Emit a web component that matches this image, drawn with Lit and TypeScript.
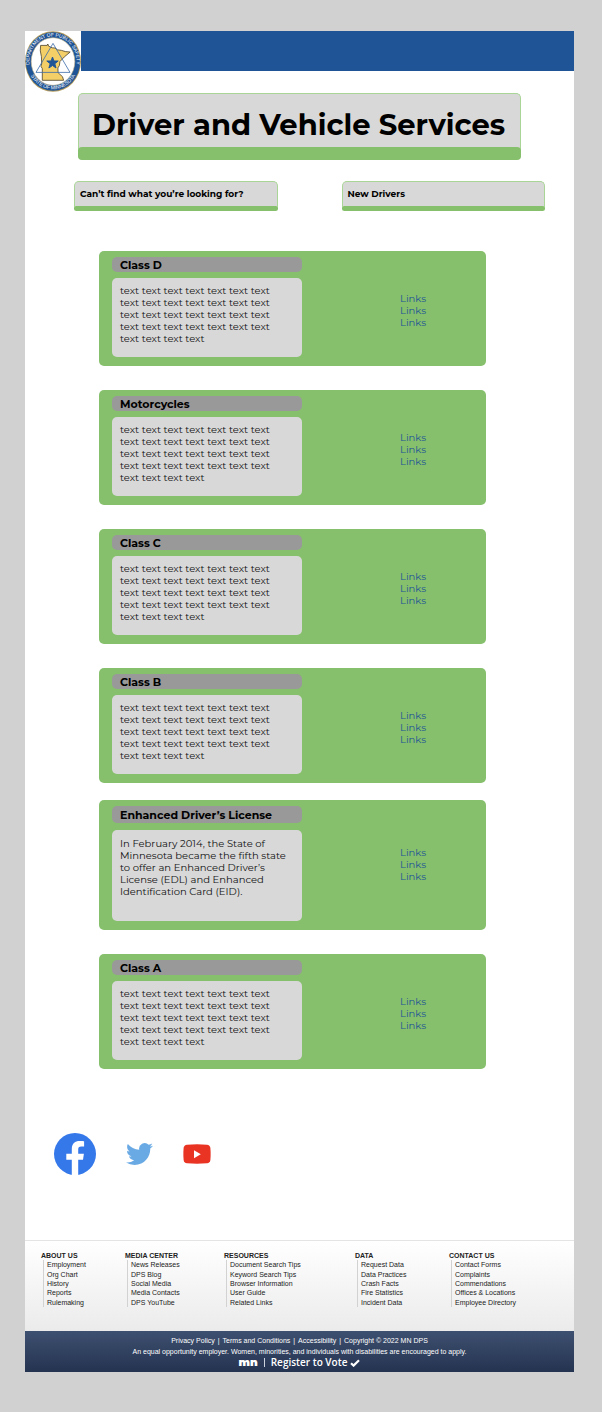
import { LitElement, html, css, svg } from "lit";
import { customElement, property } from "lit/decorators.js";

interface LicenseClass {
  title: string;
  body: string;
  featured?: boolean;
}

const FILLER = Array(32).fill("text").join(" ");

const CLASSES: LicenseClass[] = [
  { title: "Class D", body: FILLER },
  { title: "Motorcycles", body: FILLER },
  { title: "Class C", body: FILLER },
  { title: "Class B", body: FILLER },
  {
    title: "Enhanced Driver’s License",
    body: "In February 2014, the State of Minnesota became the fifth state to offer an Enhanced Driver’s License (EDL) and Enhanced Identification Card (EID).",
    featured: true,
  },
  { title: "Class A", body: FILLER },
];

const FOOTER = [
  { head: "ABOUT US", items: ["Employment", "Org Chart", "History", "Reports", "Rulemaking"] },
  { head: "MEDIA CENTER", items: ["News Releases", "DPS Blog", "Social Media", "Media Contacts", "DPS YouTube"] },
  { head: "RESOURCES", items: ["Document Search Tips", "Keyword Search Tips", "Browser Information", "User Guide", "Related Links"] },
  { head: "DATA", items: ["Request Data", "Data Practices", "Crash Facts", "Fire Statistics", "Incident Data"] },
  { head: "CONTACT US", items: ["Contact Forms", "Complaints", "Commendations", "Offices & Locations", "Employee Directory"] },
];

@customElement("dps-seal")
class DpsSeal extends LitElement {
  static styles = css`
    :host { display: block; }
    .seal { display: block; width: 100%; }
    .ring { font: 400 5px "Liberation Sans", sans-serif; fill: #fff; }
  `;
  render() {
    return html`<svg class="seal" viewBox="0 0 56 61" role="img" aria-label="Department of Public Safety, State of Minnesota">
      ${svg`
        <defs>
          <path id="top" d="M5.6 38.5 A23.6 25.2 0 1 1 50.4 38.5"/>
          <path id="bottom" d="M3 37.6 A25.9 28 0 0 0 53 37.6"/>
        </defs>
        <ellipse cx="28" cy="30.5" rx="28" ry="30.3" fill="#b59c5c"/>
        <ellipse cx="28" cy="30.5" rx="27.2" ry="29.3" fill="#1f5497"/>
        <ellipse cx="28" cy="30.5" rx="21.8" ry="23.8" fill="#fff" stroke="#c9b98a" stroke-width=".6"/>
        <path d="M15.6 14.4h6.6l.6-1.4.8 2.2 3.6 1.6 2.8.2 2.4 1.8 4.2.6 3.8 1.2 4.8.4-6 5-4.3 4.6-.5 3.9-1.5 2.4.2 4.8 4.4 4 1.1 3.6H17.3V37.6l-1.4-2.4.8-2.2-.3-7.4-1.1-5.8z" fill="#f4cf68" stroke="#4a4028" stroke-width=".8" stroke-linejoin="round"/>
        <path d="M28 12.4 45 41.4H11z" fill="none" stroke="#3a6aa8" stroke-width=".8"/>
        <path d="M27.5 26l1.4 4h4.3l-3.4 2.7 1.2 4.3-3.5-2.5-3.6 2.5 1.3-4.3-3.4-2.7h4.3z" fill="#1f5497" stroke="#1f5497"/>
        <text class="ring" text-anchor="middle"><textPath href="#top" startOffset="50%">DEPARTMENT OF PUBLIC SAFETY</textPath></text>
        <text class="ring" text-anchor="middle"><textPath href="#bottom" startOffset="50%">STATE OF MINNESOTA</textPath></text>
      `}
    </svg>`;
  }
}

@customElement("license-card")
class LicenseCard extends LitElement {
  @property() heading = "";
  @property() body = "";
  @property({ type: Boolean, reflect: true }) featured = false;

  static styles = css`
    :host {
      display: grid;
      grid-template-columns: minmax(0, 190fr) minmax(0, 172fr);
      background: #86c06c;
      border-radius: 5px;
      padding: 6px 12px 9px 13px;
    }
    .info { display: flex; flex-direction: column; gap: 6px; }
    .heading {
      margin: 0;
      padding: 1px 8px 0;
      background: #999;
      border-radius: 5px;
      font-size: 11px;
      font-weight: 700;
      line-height: 14px;
      color: #000;
      white-space: nowrap;
    }
    .body {
      box-sizing: border-box;
      margin: 0;
      min-height: 79px;
      padding: 7px 14px 7px 8px;
      background: #d8d8d8;
      border-radius: 5px;
      font-size: 10px;
      line-height: 12px;
      color: #111;
    }
    .links {
      align-self: center;
      margin: 0;
      padding: 8px 0 0 98px;
      list-style: none;
      font-size: 10px;
      line-height: 12px;
    }
    .link { color: #1f5497; text-decoration: none; }
    :host([featured]) .info { gap: 7px; }
    :host([featured]) .heading { line-height: 16px; }
    :host([featured]) .body { min-height: 91px; padding-top: 8px; }
    :host([featured]) .links { padding-top: 2px; }
  `;
  render() {
    return html`
      <div class="info">
        <h2 class="heading">${this.heading}</h2>
        <p class="body">${this.body}</p>
      </div>
      <ul class="links">
        ${[1, 2, 3].map(() => html`<li><a class="link" href="#">Links</a></li>`)}
      </ul>
    `;
  }
}

@customElement("app-root")
class AppRoot extends LitElement {
  static styles = css`
    :host {
      display: block;
      box-sizing: border-box;
      min-height: 100vh;
      padding: 31px 28px 40px 25px;
      background: #d1d1d1;
      font-family: Montserrat, Inter, sans-serif;
    }
    .page { background: #fff; }
    .banner { position: relative; height: 40px; background: #1f5497; }
    .home { position: absolute; left: 0; top: 0; width: 56px; height: 61px; background: #fff; }
    .panel { border: 1px solid #a9d596; border-bottom: 0; background: #d8d8d8; border-radius: 5px; color: #000; font-weight: 700; }
    .panel::after { content: ""; display: block; background: #86c06c; border-radius: 4px; margin: 0 -1px; }
    .title { margin: 22px 53px 0; font-size: 29px; line-height: 36px; white-space: nowrap; }
    .title-text { display: block; padding: 13px 13px 4px; }
    .title::after { height: 13px; }
    .shortcuts { display: grid; grid-template-columns: 1fr 1fr; gap: 64px; margin: 21px 29px 0 49px; }
    .shortcut { font-size: 9px; line-height: 12px; text-decoration: none; }
    .shortcut-text { display: block; padding: 6px 5px; }
    .shortcut::after { height: 5px; }
    .cards { display: flex; flex-direction: column; gap: 24px; margin: 40px 88px 0 74px; }
    .card[featured] { margin-top: -7px; }
    .social { display: flex; align-items: center; gap: 30px; padding: 64px 29px 65px; }
    .social-link { display: block; }
    .icon { display: block; }
    .sitemap {
      display: grid;
      grid-template-columns: 84fr 99fr 131fr 94fr 125fr;
      padding: 10px 0 24px 16px;
      border-top: 1px solid #e4e4e4;
      background: linear-gradient(#fff, #ebebeb);
      font-family: "Liberation Sans", Arial, sans-serif;
      font-size: 7px;
      color: #222;
    }
    .sitemap-head { margin: 0; font-size: 7px; line-height: 9px; font-weight: 700; }
    .sitemap-list {
      display: grid;
      align-items: center;
      min-height: 47px;
      margin: 0 0 0 2px;
      padding: 0 0 0 3px;
      border-left: 1px solid #d2d2d2;
      list-style: none;
      line-height: 9px;
    }
    .sitemap-link { color: inherit; text-decoration: none; }
    .legal {
      padding: 4px 0;
      background: linear-gradient(#3e5070, #243350);
      color: #fff;
      text-align: center;
      font: 7px/11px "Liberation Sans", Arial, sans-serif;
    }
    .legal-line { margin: 0; }
    .legal-nav { display: flex; justify-content: center; gap: 3px; }
    .legal-link { color: inherit; text-decoration: none; }
    .vote { display: flex; align-items: center; justify-content: center; gap: 6px; font-family: "Open Sans", "Noto Sans", sans-serif; font-size: 10px; font-weight: 600; }
    .mn { font-family: Montserrat, Inter, sans-serif; font-weight: 900; font-size: 11px; line-height: 11px; }
    .rule { width: 1px; height: 9px; background: #cdd3dd; }
    .vote-link { display: flex; align-items: center; gap: 3px; color: inherit; text-decoration: none; }
  `;

  render() {
    return html`
      <div class="page">
        <header class="banner">
          <a class="home" href="#" aria-label="Home"><dps-seal></dps-seal></a>
        </header>
        <main>
          <h1 class="panel title"><span class="title-text">Driver and Vehicle Services</span></h1>
          <nav class="shortcuts">
            <a class="panel shortcut" href="#"><span class="shortcut-text">Can’t find what you’re looking for?</span></a>
            <a class="panel shortcut" href="#"><span class="shortcut-text">New Drivers</span></a>
          </nav>
          <section class="cards">
            ${CLASSES.map(
              (c) => html`<license-card class="card" .heading=${c.title} .body=${c.body} ?featured=${c.featured}></license-card>`
            )}
          </section>
          <nav class="social">
            <a class="social-link" href="#" aria-label="Facebook">
              <svg class="icon" width="42" height="42" viewBox="0 0 42 42">
                <circle cx="21" cy="21" r="21" fill="#3578ea"/>
                <path d="M17.8 42V26.8h-5.5v-6.1h5.5v-4.8c0-5.3 3.2-7.9 7.9-7.9 2.1 0 4 .2 4.4.3v5.2h-2.8c-2.5 0-3.1 1.3-3.1 3.1v4.1h5.7l-.9 6.1h-4.8V42z" fill="#fff"/>
              </svg>
            </a>
            <a class="social-link" href="#" aria-label="Twitter">
              <svg class="icon" width="27" height="24" viewBox="0 2 24 20">
                <path fill="#6aaae4" d="M23.953 4.57a10 10 0 01-2.825.775 4.958 4.958 0 002.163-2.723c-.951.555-2.005.959-3.127 1.184a4.92 4.92 0 00-8.384 4.482C7.69 8.095 4.067 6.13 1.64 3.162a4.822 4.822 0 00-.666 2.475c0 1.71.87 3.213 2.188 4.096a4.904 4.904 0 01-2.228-.616v.06a4.923 4.923 0 003.946 4.827 4.996 4.996 0 01-2.212.085 4.936 4.936 0 004.604 3.417 9.867 9.867 0 01-6.102 2.105c-.39 0-.779-.023-1.17-.067a13.995 13.995 0 007.557 2.209c9.053 0 13.998-7.496 13.998-13.985 0-.21 0-.42-.015-.63A9.935 9.935 0 0024 4.59z"/>
              </svg>
            </a>
            <a class="social-link" href="#" aria-label="YouTube">
              <svg class="icon" width="28" height="20" viewBox="0 0 28 20">
                <path d="M4 .7Q14-.1 24 .7q3 .3 3.4 3.3.5 6 0 12-.4 3-3.4 3.3-10 .8-20 0Q1 19 .6 16q-.5-6 0-12Q1 1 4 .7z" fill="#e93323"/>
                <path d="M11 6.2v8l6.8-4z" fill="#fff"/>
              </svg>
            </a>
          </nav>
        </main>
        <footer>
          <div class="sitemap">
            ${FOOTER.map(
              (col) => html`<section>
                <h3 class="sitemap-head">${col.head}</h3>
                <ul class="sitemap-list">
                  ${col.items.map((i) => html`<li><a class="sitemap-link" href="#">${i}</a></li>`)}
                </ul>
              </section>`
            )}
          </div>
          <div class="legal">
            <p class="legal-line legal-nav">
              <a class="legal-link" href="#">Privacy Policy</a>
              <span>|</span>
              <a class="legal-link" href="#">Terms and Conditions</a>
              <span>|</span>
              <a class="legal-link" href="#">Accessibility</a>
              <span>|</span>
              <span>Copyright © 2022 MN DPS</span>
            </p>
            <p class="legal-line">An equal opportunity employer. Women, minorities, and individuals with disabilities are encouraged to apply.</p>
            <div class="vote">
              <span class="mn">mn</span>
              <span class="rule"></span>
              <a class="vote-link" href="#">Register to Vote
                <svg class="icon" width="10" height="8" viewBox="0 0 10 8"><path d="M1 4.2 3.6 6.6 9 1.2" fill="none" stroke="#fff" stroke-width="2.2"/></svg>
              </a>
            </div>
          </div>
        </footer>
      </div>
    `;
  }
}
